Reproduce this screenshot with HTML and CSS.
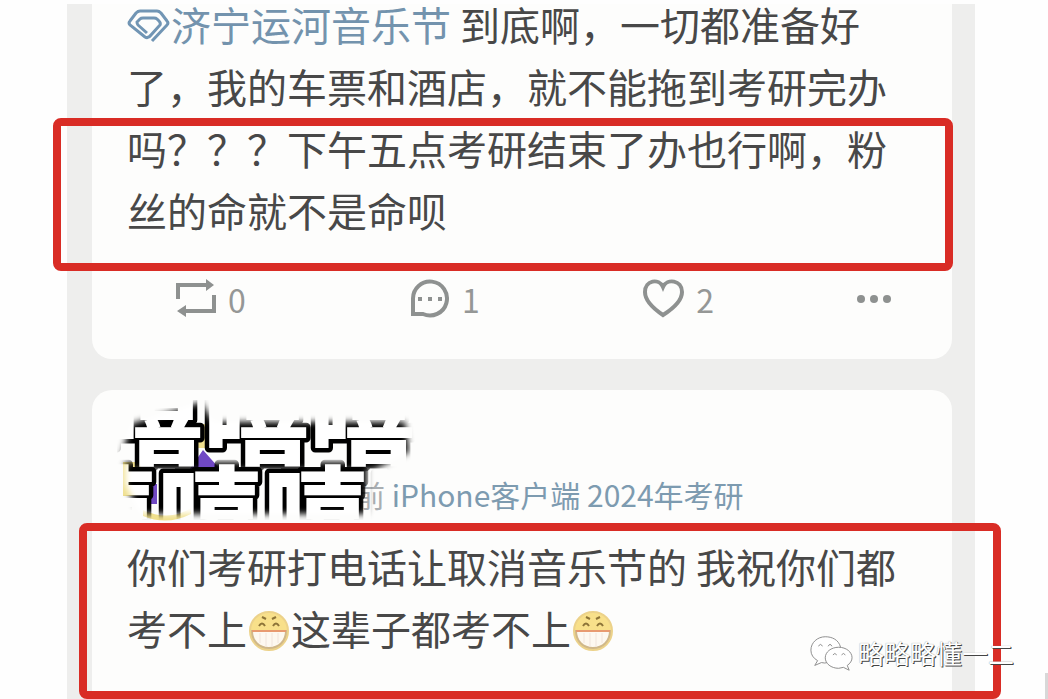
FILE: index.html
```
<!DOCTYPE html>
<html lang="zh-CN">
<head>
<meta charset="UTF-8">
<title>济宁运河音乐节</title>
<link rel="stylesheet" href="styles.css">
</head>
<body>
<svg width="0" height="0" class="defs">
  <symbol id="grin" viewBox="0 0 44 44">
    <circle cx="22" cy="22" r="19" fill="#f8e08a" stroke="#ecd28a" stroke-width="2"/>
    <path d="M5 22h34c0 10-7 17-17 17S5 32 5 22z" fill="#fdf8f0" stroke="#d0b88a" stroke-width="2"/>
    <path d="M5 22h34" stroke="#e89a70" stroke-width="2"/>
    <path d="M13 24v10M19 24v14M25 24v14M31 24v10" stroke="#f0e4dc"/>
    <path d="M12 17q3-5 6 0M26 17q3-5 6 0M15 8l4 2M29 8l-4 2" fill="none" stroke="#8d7438" stroke-width="2"/>
  </symbol>
</svg>
<main class="feed">
  <article class="card">
    <p class="text"><a href="#"><svg class="gem" viewBox="0 0 44 36"><path d="M25 33 40 17Q42 15 40 13L34 5Q32 3 30 3H13Q11 3 9 5L3 13Q1 15 3 17L18 29Q21 31 24 27L33 17Q34 15 32 13L30 11Q29 10 27 10H16Q14 10 13 11L10 14Q10 16 11 17L20 25"/></svg>济宁运河音乐节</a> 到底啊，一切都准备好<br>了，我的车票和酒店，就不能拖到考研完办<br>吗？？？下午五点考研结束了办也行啊，粉<br>丝的命就不是命呗</p>
    <div class="actions">
      <button type="button" aria-label="转发"><svg width="42" height="40" viewBox="0 0 42 40"><path d="M3 20V6h30M39 16v16H9"/><path class="solid" d="M31 0l8 6-8 6zM11 26l-9 6 9 6z"/></svg>0</button>
      <button type="button" aria-label="评论"><svg width="42" height="40" viewBox="0 0 42 40"><path d="M4 35V20A17 17 0 1 1 14 35z"/><path class="solid" d="M9 18h4v4H9zM19 18h4v4h-4zM29 18h4v4h-4z"/></svg>1</button>
      <button type="button" aria-label="赞"><svg width="42" height="40" viewBox="0 0 42 40"><path d="M20 36Q2 24 2 13C2 1 16-1 20 8C24-1 39 1 39 13Q39 24 20 36z"/></svg>2</button>
      <button type="button" aria-label="更多"><svg width="36" height="40" viewBox="0 0 36 40"><g class="solid"><circle cx="5" cy="20" r="4"/><circle cx="18" cy="20" r="4"/><circle cx="31" cy="20" r="4"/></g></svg></button>
    </div>
    <div class="mark mark-top"></div>
  </article>

  <article class="card">
    <header class="author">
      <svg class="scribble" viewBox="0 0 300 130">
        <defs>
          <filter id="soft"><feGaussianBlur stdDeviation="3"/></filter>
          <mask id="row1"><path d="M14 24 60 10 84 2 96 22H288L292 52 256 70H0z" fill="#fff" filter="url(#soft)"/></mask>
          <mask id="row2"><path d="M8 62H250V114H24L14 96 8 84z" fill="#fff" filter="url(#soft)"/></mask>
        </defs>
        <path d="M78 24h12v24H78zM6 62h18v34H6zM26 110q26 12 48-2v6q-24 12-48 2z" fill="#f0e08e"/>
        <path d="M68 76 86 50l16 18zM26 84h14v20H26z" fill="#7048c4"/>
        <g mask="url(#row1)"><text x="-20" y="56">嘻嘻嘻</text></g>
        <g mask="url(#row2)"><text x="-66" y="155">嘻嘻嘻嘻</text></g>
      </svg>
      <p class="meta"><span>前</span> iPhone客户端 2024年考研</p>
    </header>
    <p class="text">你们考研打电话让取消音乐节的 我祝你们都<br>考不上<svg class="emoji"><use href="#grin"/></svg>这辈子都考不上<svg class="emoji"><use href="#grin"/></svg></p>
    <div class="mark mark-bottom"></div>
  </article>
</main>
<div class="watermark">
  <svg width="44" height="38" viewBox="0 0 46 38">
    <path d="M9 27 6 32 13 29Q17 30 19 29M33 13C31 5 24 2 17 2 9 2 2 8 2 16q0 7 7 11"/>
    <path d="M31 13c-8 0-14 5-14 11s6 11 14 11l5-1 6 3-2-5c3-2 5-5 5-8 0-6-6-11-14-11z"/>
    <path d="M10 12q2-4 4 0M20 12q2-4 4 0M25 21q2-3 4 0M34 21q2-3 4 0"/>
  </svg>
  <span>略略略懂一二</span>
</div>
<div class="scrollbar"></div>
</body>
</html>
```
FILE: styles.css
```
body {
  margin: 0;
  padding-top: 4px;
  height: 100vh;
  box-sizing: border-box;
  overflow: hidden;
  position: relative;
  background: #fefefe;
  color: #484848;
  font-family: "Noto Sans CJK SC", sans-serif;
}
.defs {
  position: absolute;
}
.feed {
  display: flow-root;
  margin: 0 73px 0 67px;
  padding: 0 23px 0 25px;
  background: #eeeeed;
}
.card {
  display: flow-root;
  position: relative;
  padding: 0 24px 40px 35px;
  border-radius: 0 0 20px 20px;
  background: #fdfdfc;
}
.card + .card {
  margin-top: 31px;
  border-radius: 20px 20px 0 0;
}
.text {
  margin: 0;
  font-size: 40px;
  line-height: 62px;
  white-space: nowrap;
}
/* first post is scrolled slightly under the top edge */
.card:first-child .text {
  margin-top: -11px;
}
.text a {
  color: #7393ad;
  text-decoration: none;
}
.gem {
  width: 44px;
  height: 36px;
  vertical-align: -3px;
  fill: none;
  stroke: #7195b4;
  stroke-width: 3;
}
.emoji {
  width: 44px;
  height: 44px;
  vertical-align: -8px;
}
.actions {
  display: grid;
  grid-template-columns: 11fr 11fr 10fr auto;
  margin-top: 38px;
  padding: 0 36px 0 48px;
}
.actions button {
  display: flex;
  align-items: center;
  gap: 11px;
  height: 40px;
  padding: 0;
  border: 0;
  background: none;
  color: #959796;
  font: 32px "Noto Sans CJK SC", sans-serif;
}
.actions svg {
  fill: none;
  stroke: #8e9190;
  stroke-width: 4;
}
.actions .solid {
  fill: #8e9190;
  stroke: none;
}
.mark {
  position: absolute;
  border: 8px solid #d92c25;
  border-radius: 8px;
  box-sizing: border-box;
}
.mark-top {
  top: 114px;
  left: -39px;
  right: -1px;
  height: 153px;
}
.mark-bottom {
  top: 133px;
  left: -13px;
  right: -49px;
  height: 176px;
}
.author {
  position: relative;
  display: flex;
  align-items: flex-end;
  height: 145px;
  box-sizing: border-box;
  padding: 0 0 21px 228px;
}
.meta {
  margin: 0;
  color: #7d9bb0;
  font-size: 30px;
  line-height: 40px;
  white-space: nowrap;
}
.meta span {
  color: #a9aeb2;
}
.scribble {
  position: absolute;
  top: 10px;
  left: -10px;
  width: 300px;
  height: 130px;
}
.scribble text {
  fill: #fff;
  stroke: #000;
  stroke-width: 9px;
  stroke-linejoin: round;
  paint-order: stroke;
  font-size: 106px;
  font-weight: 900;
}
.watermark {
  position: absolute;
  right: 34px;
  bottom: 26px;
  display: flex;
  align-items: center;
  gap: 5px;
  color: #fff;
  font-size: 26px;
  line-height: 40px;
  text-shadow: 1px 1px 0 #444, 0 0 1px #888;
}
.watermark svg {
  fill: #fff;
  stroke: #8a8a8a;
  stroke-width: 1;
}
.scrollbar {
  position: absolute;
  right: 0;
  bottom: 0;
  width: 3px;
  height: 26px;
  background: #d8d8d8;
}
```
